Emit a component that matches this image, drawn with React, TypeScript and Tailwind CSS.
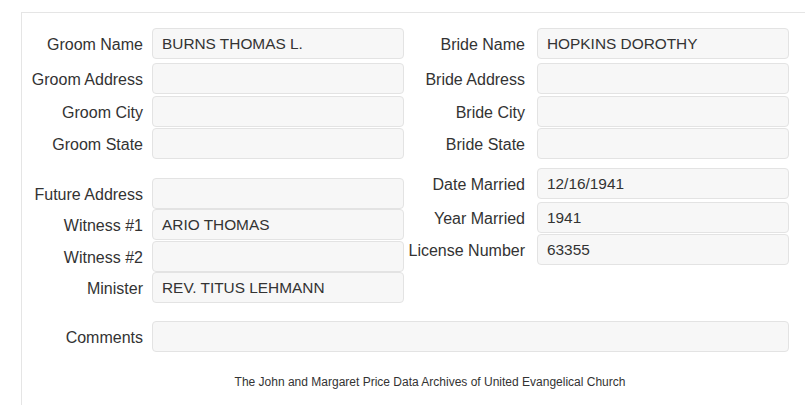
const font = { fontFamily: '"Liberation Sans", Arial, sans-serif' };

type Field = { label: string; value?: string; mt: string };

const groomFields: Field[] = [
  { label: 'Groom Name', value: 'BURNS THOMAS L.', mt: 'mt-0' },
  { label: 'Groom Address', mt: 'mt-[4px]' },
  { label: 'Groom City', mt: 'mt-[2px]' },
  { label: 'Groom State', mt: 'mt-[1px]' },
  { label: 'Future Address', mt: 'mt-[19px]' },
  { label: 'Witness #1', value: 'ARIO THOMAS', mt: 'mt-0' },
  { label: 'Witness #2', mt: 'mt-[1px]' },
  { label: 'Minister', value: 'REV. TITUS LEHMANN', mt: 'mt-0' },
];

const brideFields: Field[] = [
  { label: 'Bride Name', value: 'HOPKINS DOROTHY', mt: 'mt-0' },
  { label: 'Bride Address', mt: 'mt-[4px]' },
  { label: 'Bride City', mt: 'mt-[2px]' },
  { label: 'Bride State', mt: 'mt-[1px]' },
  { label: 'Date Married', value: '12/16/1941', mt: 'mt-[9px]' },
  { label: 'Year Married', value: '1941', mt: 'mt-[3px]' },
  { label: 'License Number', value: '63355', mt: 'mt-[1px]' },
];

function Input({ value, width }: { value?: string; width: string }) {
  return (
    <div
      className={`${width} h-[31px] shrink-0 rounded-[4px] border border-[#e3e3e3] bg-[#f7f7f7] px-[9px] flex items-center text-[15.4px] text-[#333]`}
    >
      {value}
    </div>
  );
}

function Row({ field, labelWidth, pr }: { field: Field; labelWidth: string; pr: string }) {
  return (
    <div className={`flex items-center ${field.mt}`}>
      <label className={`${labelWidth} ${pr} shrink-0 pt-[3px] text-right text-[16px] text-[#333] whitespace-nowrap`}>
        {field.label}
      </label>
      <Input value={field.value} width="w-[252px]" />
    </div>
  );
}

export default function App() {
  return (
    <div className="w-full h-[405px] overflow-hidden bg-white" style={font}>
      <div className="ml-[21px] mt-[12px] w-[817px] h-[420px] border-t border-l border-[#e5e5e5] pt-[15px]">
        <div className="flex">
          {/* Groom side */}
          <div className="flex flex-col">
            {groomFields.map((f) => (
              <Row key={f.label} field={f} labelWidth="w-[130px]" pr="pr-[9px]" />
            ))}
          </div>

          {/* Bride side */}
          <div className="flex flex-col">
            {brideFields.map((f) => (
              <Row key={f.label} field={f} labelWidth="w-[133px]" pr="pr-[12px]" />
            ))}
          </div>
        </div>

        {/* Comments */}
        <div className="flex items-center mt-[18px]">
          <label className="w-[130px] pr-[9px] shrink-0 pt-[3px] text-right text-[16px] text-[#333]">Comments</label>
          <Input width="w-[637px]" />
        </div>

        <p className="mt-[21px] text-center text-[12px] text-[#333]">
          The John and Margaret Price Data Archives of United Evangelical Church
        </p>
      </div>
    </div>
  );
}
